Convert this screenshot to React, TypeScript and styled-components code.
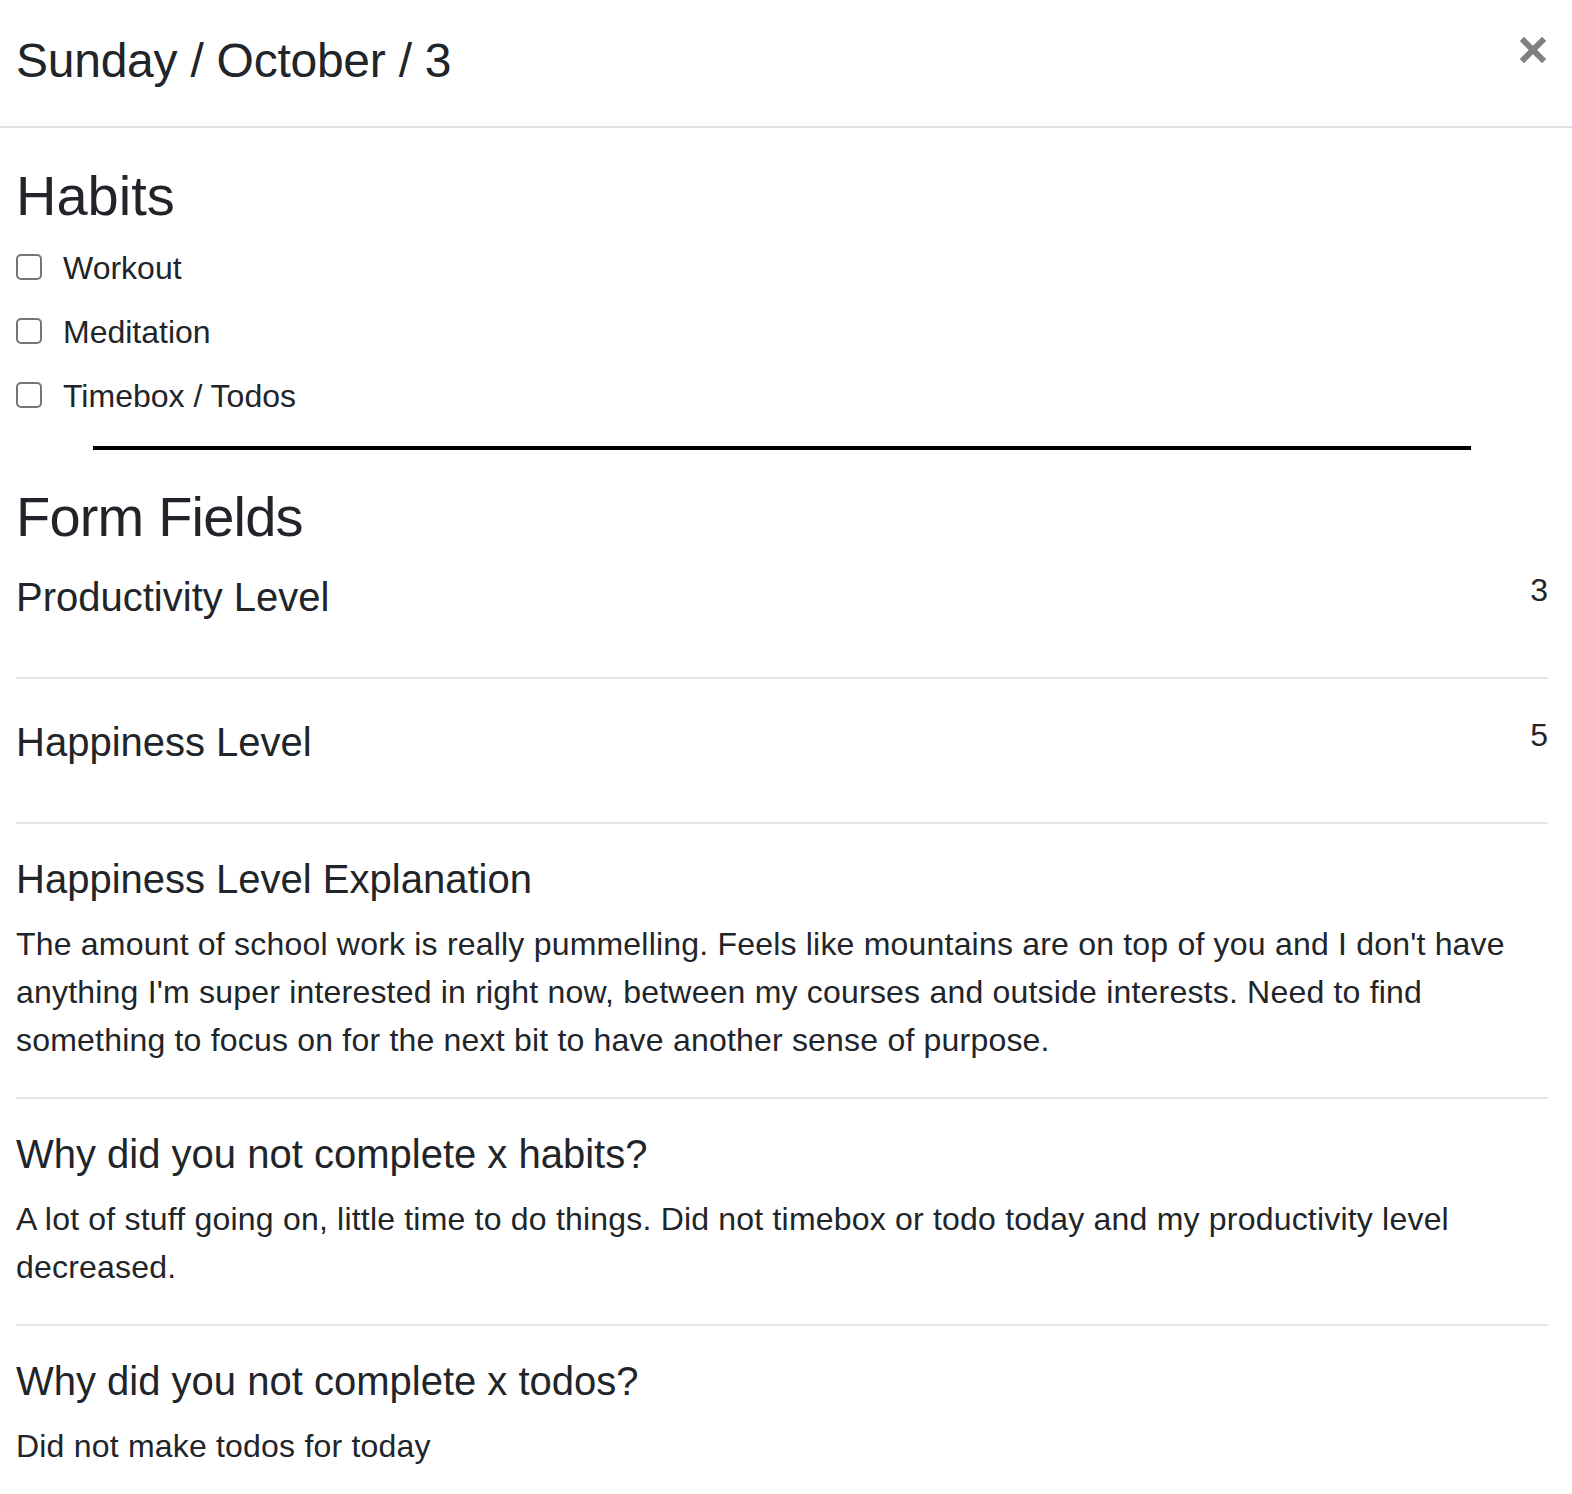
import React from "react";
import styled, { createGlobalStyle } from "styled-components";

const GlobalStyle = createGlobalStyle`
  html, body {
    margin: 0;
    padding: 0;
    background: #ffffff;
  }
  body {
    font-family: "Liberation Sans", Arial, sans-serif;
    color: #212529;
  }
  * { box-sizing: border-box; }
`;

const Modal = styled.div`
  width: 100%;
  background: #fff;
`;

const Header = styled.header`
  display: flex;
  justify-content: space-between;
  align-items: flex-start;
  padding: 32px 26px 36px 16px;
  border-bottom: 2px solid #dee2e6;
`;

const Title = styled.h4`
  margin: 0;
  font-size: 48px;
  line-height: 1.2;
  font-weight: 400;
  letter-spacing: -0.25px;
  color: #212529;
`;

const CloseButton = styled.button`
  margin-top: 5px;
  padding: 0;
  border: 0;
  background: transparent;
  width: 26px;
  height: 26px;
  display: flex;
  cursor: pointer;
`;

const Body = styled.main`
  padding: 0 24px 24px 16px;
`;

const SectionTitle = styled.h3<{ $top: number; $bottom: number; $tracking?: number }>`
  margin: ${(p) => p.$top}px 0 ${(p) => p.$bottom}px;
  font-size: 56px;
  line-height: 1.2;
  font-weight: 400;
  letter-spacing: ${(p) => p.$tracking ?? 0}px;
  color: #212529;
`;

const CheckList = styled.div`
  display: flex;
  flex-direction: column;
  gap: 16px;
`;

const CheckRow = styled.label`
  display: flex;
  align-items: flex-start;
  height: 48px;
  font-size: 32px;
  line-height: 48px;
  color: #212529;
`;

const Box = styled.span`
  width: 26px;
  height: 26px;
  margin-top: 10px;
  margin-right: 21px;
  border: 2px solid #767676;
  border-radius: 5px;
  background: #fff;
  flex: none;
`;

const Rule = styled.hr`
  width: 90%;
  margin: 26px auto 0;
  border: 0;
  border-top: 4px solid #000;
  height: 0;
`;

const Field = styled.section<{ $first?: boolean; $last?: boolean; $bottom: number }>`
  padding-top: ${(p) => (p.$first ? 0 : 31)}px;
  padding-bottom: ${(p) => (p.$last ? 0 : p.$bottom)}px;
  border-bottom: ${(p) => (p.$last ? "none" : "2px solid #e5e5e5")};
`;

const NumericRow = styled.div<{ $first?: boolean }>`
  display: flex;
  justify-content: space-between;
  align-items: flex-start;
  padding-top: ${(p) => (p.$first ? 0 : 1)}px;
`;

const FieldTitle = styled.h5<{ $offset?: number; $gap?: number }>`
  margin: ${(p) => p.$offset ?? 0}px 0 ${(p) => p.$gap ?? 0}px;
  font-size: 40px;
  line-height: 48px;
  font-weight: 400;
  color: #212529;
`;

const Value = styled.span`
  font-size: 32px;
  line-height: 48px;
  color: #212529;
`;

const Answer = styled.p`
  margin: 0;
  font-size: 32px;
  line-height: 48px;
  letter-spacing: 0.2px;
  color: #212529;
`;

const habits = ["Workout", "Meditation", "Timebox / Todos"];

const numeric = [
  { label: "Productivity Level", value: 3 },
  { label: "Happiness Level", value: 5 },
];

const textFields = [
  {
    label: "Happiness Level Explanation",
    text:
      "The amount of school work is really pummelling. Feels like mountains are on top of you and I don't have anything I'm super interested in right now, between my courses and outside interests. Need to find something to focus on for the next bit to have another sense of purpose.",
  },
  {
    label: "Why did you not complete x habits?",
    text:
      "A lot of stuff going on, little time to do things. Did not timebox or todo today and my productivity level decreased.",
  },
  {
    label: "Why did you not complete x todos?",
    text: "Did not make todos for today",
  },
];

export default function App() {
  return (
    <Modal>
      <GlobalStyle />
      <Header>
        <Title>Sunday / October / 3</Title>
        <CloseButton aria-label="Close">
          <svg width="26" height="26" viewBox="0 0 26 26">
            <path
              d="M4 4 L22 22 M22 4 L4 22"
              stroke="#808080"
              strokeWidth="6"
              strokeLinecap="square"
              fill="none"
            />
          </svg>
        </CloseButton>
      </Header>
      <Body>
        <SectionTitle $top={34} $bottom={15}>
          Habits
        </SectionTitle>
        <CheckList>
          {habits.map((h) => (
            <CheckRow key={h}>
              <Box />
              {h}
            </CheckRow>
          ))}
        </CheckList>
        <Rule />
        <SectionTitle $top={33} $bottom={16} $tracking={-0.8}>
          Form Fields
        </SectionTitle>
        {numeric.map((f, i) => (
          <Field key={f.label} $first={i === 0} $bottom={56}>
            <NumericRow $first={i === 0}>
              <FieldTitle $offset={7}>{f.label}</FieldTitle>
              <Value>{f.value}</Value>
            </NumericRow>
          </Field>
        ))}
        {textFields.map((f, i) => (
          <Field key={f.label} $last={i === textFields.length - 1} $bottom={33}>
            <FieldTitle $gap={17}>{f.label}</FieldTitle>
            <Answer>{f.text}</Answer>
          </Field>
        ))}
      </Body>
    </Modal>
  );
}
